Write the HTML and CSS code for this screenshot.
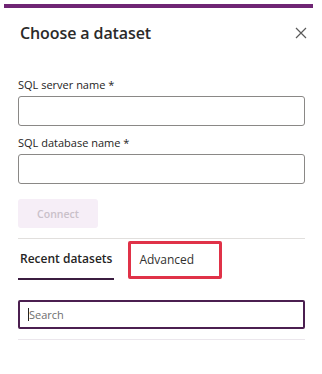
FILE: index.html
```html
<!DOCTYPE html>
<html lang="en">
<head>
    <meta charset="UTF-8">
    <meta name="viewport" content="width=device-width, initial-scale=1.0">
    <title>Choose a dataset</title>
    <link rel="stylesheet" href="styles.css">
</head>
<body>

    <div class="topbar"></div>

    <div class="header">
        <h1>Choose a dataset</h1>
        <button class="close-btn" aria-label="Close">
            <svg width="12" height="12" viewBox="0 0 12 12">
                <path d="M1 1 L11 11 M11 1 L1 11" stroke="#5a5a5a" stroke-width="1.2" fill="none"/>
            </svg>
        </button>
    </div>

    <div class="panel">
        <label class="field-label first">SQL server name *</label>
        <input class="field-input" type="text">

        <label class="field-label">SQL database name *</label>
        <input class="field-input" type="text">

        <button class="connect-btn" disabled>Connect</button>

        <div class="divider"></div>

        <div class="tabs">
            <div class="tab active">Recent datasets</div>
            <div class="tab highlight">Advanced</div>
        </div>

        <div class="search-box">
            <span class="caret"></span><span class="placeholder">Search</span>
        </div>

        <div class="divider light"></div>
    </div>

</body>
</html>
```

FILE: styles.css
```css
body {
    font-family: "Open Sans", "Noto Sans", Arial, sans-serif;
    margin: 0;
    padding: 0;
    background-color: #fff;
    color: #252423;
}

.topbar {
    height: 4px;
    margin: 4px 9px 0 4px;
    background-color: #6f2574;
}

.header {
    display: flex;
    justify-content: space-between;
    align-items: center;
    padding: 13px 15px 0 20px;
}

.header h1 {
    margin: 0;
    font-size: 16px;
    font-weight: 600;
    line-height: 24px;
    letter-spacing: -0.1px;
    color: #2b2a29;
}

.close-btn {
    border: none;
    background: none;
    padding: 0;
    width: 12px;
    height: 12px;
    display: flex;
}

.panel {
    display: flex;
    flex-direction: column;
    padding: 0 17px 0 18px;
}

.field-label {
    font-size: 11px;
    line-height: 16px;
    font-weight: 500;
    margin-top: 9px;
}

.field-label.first {
    margin-top: 32px;
}

.field-label + .field-input {
    margin-top: 3px;
}

.field-input {
    height: 30px;
    box-sizing: border-box;
    border: 1px solid #8a8886;
    border-radius: 3px;
    font-family: inherit;
}

.connect-btn {
    width: 80px;
    height: 29px;
    margin-top: 15px;
    border: none;
    border-radius: 3px;
    background-color: #f6eef7;
    color: #c9c0c9;
    font-family: inherit;
    font-size: 10.5px;
    font-weight: 600;
}

.divider {
    height: 1px;
    background-color: #e1dfdd;
    margin-top: 10px;
}

.divider.light {
    background-color: #ebe6ec;
}

.tabs {
    display: flex;
    align-items: center;
    height: 41px;
}

.tab {
    font-size: 12px;
    box-sizing: border-box;
}

.tab.active {
    font-weight: 600;
    height: 41px;
    padding: 0 2px;
    line-height: 39px;
    border-bottom: 2px solid #3b1d40;
    margin-top: -1px;
}

.tab.highlight {
    margin-left: 14px;
    height: 38px;
    width: 94px;
    padding-left: 8px;
    line-height: 32px;
    border: 3px solid #e03248;
    border-radius: 2px;
    color: #323130;
}

.search-box {
    display: flex;
    align-items: center;
    height: 29px;
    margin-top: 20px;
    box-sizing: border-box;
    border: 2px solid #4b1f50;
    border-radius: 2px;
    padding-left: 8px;
}

.caret {
    width: 1px;
    height: 13px;
    background-color: #252423;
}

.placeholder {
    font-size: 11px;
    color: #6e6e6e;
}
```
